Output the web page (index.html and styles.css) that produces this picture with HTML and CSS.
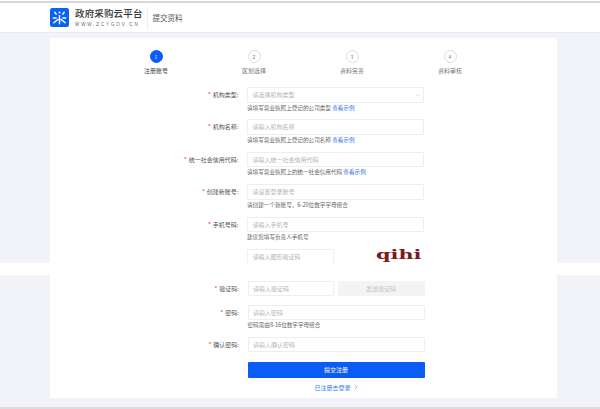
FILE: index.html
```html
<!DOCTYPE html>
<html lang="zh-CN">
<head>
    <meta charset="UTF-8">
    <title>提交资料</title>
    <link rel="stylesheet" href="styles.css">
</head>
<body>
    <div class="header">
        <svg class="logo" viewBox="0 0 20 20">
            <rect width="20" height="20" rx="2.5" fill="#0a62f5"/>
            <g stroke="#fff" stroke-width="1.5" stroke-linecap="round" fill="none">
                <path d="M10 8v8.5"/>
                <path d="M4 15.5l4.5-3.5"/>
                <path d="M16 15.5l-4.5-3.5"/>
                <path d="M3.5 10.5h3"/>
                <path d="M13.5 10.5h3"/>
                <path d="M5 4.5l1.5 2"/>
                <path d="M15 4.5l-1.5 2"/>
            </g>
            <circle cx="10" cy="4.8" r="1.1" fill="#fff"/>
        </svg>
        <div class="brand">
            <div class="brand-name">政府采购云平台</div>
            <div class="brand-url">WWW.ZCYGOV.CN</div>
        </div>
        <div class="page-title">提交资料</div>
    </div>

    <div class="panel panel-top">
        <div class="card">
            <div class="steps">
                <div class="step active"><span class="step-num">1</span><span>注册账号</span></div>
                <div class="step"><span class="step-num">2</span><span>区划选择</span></div>
                <div class="step"><span class="step-num">3</span><span>资料完善</span></div>
                <div class="step"><span class="step-num">4</span><span>资料审核</span></div>
            </div>

            <div class="row">
                <label class="label"><i>*</i>机构类型:</label>
                <div class="field">
                    <div class="input">请选择机构类型
                        <svg class="arrow" viewBox="0 0 8 5"><path d="M1 1l3 3 3-3" fill="none" stroke="#bbb" stroke-width="0.8"/></svg>
                    </div>
                    <div class="hint">请填写营业执照上登记的公司类型 <a>查看示例</a></div>
                </div>
            </div>
            <div class="row">
                <label class="label"><i>*</i>机构名称:</label>
                <div class="field">
                    <div class="input">请输入机构名称</div>
                    <div class="hint">请填写营业执照上登记的公司名称 <a>查看示例</a></div>
                </div>
            </div>
            <div class="row">
                <label class="label"><i>*</i>统一社会信用代码:</label>
                <div class="field">
                    <div class="input">请输入统一社会信用代码</div>
                    <div class="hint">请填写营业执照上的统一社会信用代码 <a>查看示例</a></div>
                </div>
            </div>
            <div class="row">
                <label class="label"><i>*</i>创建新账号:</label>
                <div class="field">
                    <div class="input">请设置登录账号</div>
                    <div class="hint">请创建一个新账号，6-20位数字字母组合</div>
                </div>
            </div>
            <div class="row">
                <label class="label"><i>*</i>手机号码:</label>
                <div class="field">
                    <div class="input">请输入手机号</div>
                    <div class="hint">建议您填写负责人手机号</div>
                </div>
            </div>
            <div class="row">
                <div class="label"></div>
                <div class="field split">
                    <div class="input">请输入图形验证码</div>
                    <div class="captcha"><span>qihi</span></div>
                </div>
            </div>
        </div>
    </div>

    <div class="band"></div>

    <div class="panel panel-bottom">
        <div class="card">
            <div class="row row-short">
                <label class="label"><i>*</i>验证码:</label>
                <div class="field split">
                    <div class="input">请输入验证码</div>
                    <div class="send-btn">发送验证码</div>
                </div>
            </div>
            <div class="row">
                <label class="label"><i>*</i>密码:</label>
                <div class="field">
                    <div class="input">请输入密码</div>
                    <div class="hint">密码需由8-16位数字字母组合</div>
                </div>
            </div>
            <div class="row row-confirm">
                <label class="label"><i>*</i>确认密码:</label>
                <div class="field">
                    <div class="input">请输入确认密码</div>
                </div>
            </div>
            <div class="row row-submit">
                <div class="label"></div>
                <div class="field">
                    <div class="submit">提交注册</div>
                    <div class="login-link">已注册去登录
                        <svg class="chevron" viewBox="0 0 5 8"><path d="M1 1l3 3-3 3" fill="none" stroke="#5b8ff5" stroke-width="0.8"/></svg>
                    </div>
                </div>
            </div>
        </div>
    </div>
</body>
</html>
```

FILE: styles.css
```css
html, body {
    margin: 0;
    height: 409px;
    overflow: hidden;
}
body {
    display: flex;
    flex-direction: column;
    background-color: #fff;
    color: #555;
    font-family: "Noto Sans CJK SC", "Noto Sans", sans-serif;
    font-size: 6px;
    filter: blur(0.5px);
}

/* 顶部导航 */
.header {
    display: flex;
    align-items: center;
    height: 29px;
    margin-top: 1px;
    padding-left: 50px;
    background-color: #fff;
    border-top: 2px solid #d8d8d8;
    border-bottom: 1px solid #e8ebf2;
    flex-shrink: 0;
}
.logo {
    width: 19px;
    height: 19px;
    margin-right: 6px;
}
.brand {
    padding-right: 4px;
    border-right: 1px solid #eee;
}
.brand-name {
    font-size: 9.5px;
    font-weight: 500;
    line-height: 12px;
    letter-spacing: 0.15px;
    color: #333;
}
.brand-url {
    margin-top: 2px;
    font-size: 4.5px;
    line-height: 8px;
    letter-spacing: 1.88px;
    color: #666;
    font-family: "Liberation Sans", sans-serif;
}
.page-title {
    margin-left: 5px;
    font-size: 7.5px;
    color: #555;
}

.panel {
    display: flex;
    padding-left: 50px;
    background-color: #f1f3f8;
    overflow: hidden;
}
.card {
    width: 507px;
    background-color: #fff;
    box-sizing: border-box;
}
.panel-top {
    height: 230px;
    padding-top: 5px;
    box-sizing: border-box;
    flex-shrink: 0;
}
.band {
    height: 12px;
    flex-shrink: 0;
}
.panel-bottom {
    height: 134px;
    padding-bottom: 9px;
    box-sizing: border-box;
    flex-shrink: 0;
    border-bottom: 2px solid #dcdcdc;
}
.panel-bottom .card {
    padding-top: 5.5px;
    padding-left: 0.5px;
}

/* 步骤条 */
.steps {
    display: flex;
    padding: 12px 0 0 57px;
    height: 37px;
}
.step {
    display: flex;
    flex-direction: column;
    align-items: center;
    width: 98px;
    font-size: 6px;
    color: #777;
    flex-shrink: 0;
}
.step-num {
    display: flex;
    align-items: center;
    justify-content: center;
    width: 11px;
    height: 11px;
    margin-bottom: 3px;
    border: 1px solid #ddd;
    border-radius: 50%;
    font-size: 5px;
    line-height: 1;
}
.step.active {
    color: #444;
}
.step.active .step-num {
    background-color: #0a5cf5;
    border-color: #0a5cf5;
    color: #fff;
}

/* 表单 */
.row {
    display: flex;
    height: 32.4px;
}
.row-short {
    height: 24px;
}
.row-confirm {
    height: 25.5px;
}
.label {
    width: 197px;
    height: 15.5px;
    line-height: 15.5px;
    padding-right: 8.5px;
    box-sizing: border-box;
    text-align: right;
    color: #555;
    flex-shrink: 0;
}
.label i {
    color: #e5352b;
    font-style: normal;
    margin-right: 2px;
}
.field {
    width: 177px;
}
.split {
    display: grid;
    grid-template-columns: 86.5px 87px;
    column-gap: 3.5px;
}
.input {
    position: relative;
    height: 15.5px;
    line-height: 14px;
    padding-left: 4.5px;
    box-sizing: border-box;
    border: 1px solid #eceef2;
    border-radius: 1px;
    color: #b5b5b5;
    background-color: #fff;
}
.arrow {
    position: absolute;
    right: 3px;
    top: 5px;
    width: 5px;
    height: 4px;
}
.hint {
    margin-top: 1px;
    line-height: 9px;
    font-size: 5.6px;
    color: #666;
}
.hint a {
    color: #2f6fe8;
}
.captcha {
    padding-left: 39px;
    font-family: "DejaVu Serif", serif;
    font-size: 13px;
    font-weight: bold;
    line-height: 11px;
    color: #7c1a1a;
}
.captcha span {
    display: inline-block;
    transform: scaleX(1.6);
    transform-origin: left center;
}
.send-btn {
    height: 15.5px;
    line-height: 15.5px;
    text-align: center;
    background-color: #f4f4f4;
    border-radius: 1px;
    color: #c4c4c4;
}
.row-submit {
    height: auto;
}
.submit {
    height: 15.5px;
    line-height: 15.5px;
    text-align: center;
    background-color: #0a5cf5;
    border-radius: 1px;
    color: #fff;
}
.login-link {
    display: flex;
    justify-content: center;
    align-items: center;
    gap: 3px;
    margin-top: 4px;
    line-height: 11px;
    color: #3f7cf0;
}
.chevron {
    width: 4px;
    height: 6px;
}
```
